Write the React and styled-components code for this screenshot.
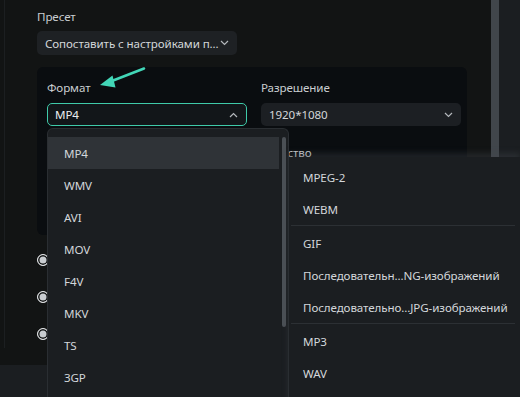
import React from "react";
import styled, { createGlobalStyle } from "styled-components";

const Global = createGlobalStyle`
  html, body { margin: 0; padding: 0; background: #121414; }
  body { font-family: "Noto Sans", "Open Sans", sans-serif; font-size: 11.6px; letter-spacing: -0.1px; }
  * { box-sizing: border-box; }
`;

const Screen = styled.div`
  position: relative;
  width: 520px;
  height: 397px;
  overflow: hidden;
  display: grid;
  grid-template-columns: 491px 8px 21px;
  grid-template-rows: 365px 32px;
  background: #1b1e21;
`;

const Main = styled.div`
  position: relative;
  background: #121414;
  padding: 9px 0 0 37px;
  &::before {
    content: "";
    position: absolute;
    left: 4px;
    top: 0;
    height: 348px;
    width: 1px;
    background: #1c1f21;
  }
`;

const ScrollTrack = styled.div`
  background: #41464b;
`;

const Side = styled.div`
  background: #1b1e21;
`;

const Footer = styled.div`
  grid-column: 1 / 4;
  background: #1b1e21;
`;

const Label = styled.div`
  line-height: 16px;
  height: 16px;
  color: #c9cdd1;
  white-space: nowrap;
`;

const SelectBox = styled.div`
  display: flex;
  align-items: center;
  justify-content: space-between;
  width: ${(p) => p.$w || 200}px;
  height: ${(p) => p.$h || 23}px;
  margin-top: ${(p) => p.$mt || 7}px;
  padding: 0 8px 0 ${(p) => (p.$active ? 7 : 8)}px;
  border-radius: 5px;
  background: ${(p) => (p.$active ? "#121619" : p.$bg || "#1c1f23")};
  border: ${(p) => (p.$active ? "1px solid #3fcaa9" : "none")};
  color: ${(p) => (p.$active ? "#eceef0" : "#d3d6d9")};
  white-space: nowrap;
`;

const Card = styled.div`
  width: 430px;
  height: 168px;
  margin-top: 12px;
  background: #0a0d10;
  border-radius: 6px;
  padding: 13px 6px 0 10px;
`;

const FieldGrid = styled.div`
  display: grid;
  grid-template-columns: 199px 200px;
  column-gap: 15px;
  row-gap: 19px;
`;

const Field = styled.div`
  display: flex;
  flex-direction: column;
`;

const Radios = styled.div`
  display: flex;
  flex-direction: column;
  gap: 25px;
  margin-top: 19px;
`;

const RadioDot = styled.span`
  display: block;
  width: 12px;
  height: 12px;
  border-radius: 50%;
  border: 1.5px solid #e4e6e8;
  background: #c8ccd0;
  box-shadow: inset 0 0 0 1.5px #121414;
`;

const Menu = styled.div`
  position: absolute;
  left: 47px;
  top: 128px;
  width: 242px;
  height: 290px;
  display: flex;
  background: #1b1e21;
  border: 1px solid #2a2e32;
  border-bottom: none;
  border-radius: 6px 6px 0 0;
  padding-top: 8px;
`;

const MenuList = styled.div`
  flex: 1;
  display: flex;
  flex-direction: column;
`;

const MenuRail = styled.div`
  width: 9px;
  padding: 0 1px 0 3px;
`;

const Thumb = styled.div`
  width: 4px;
  height: 190px;
  border-radius: 2px;
  background: #4b5055;
`;

const Item = styled.div`
  flex-shrink: 0;
  display: flex;
  align-items: center;
  height: 32px;
  padding-left: ${(p) => p.$pl || 16}px;
  color: #d3d7db;
  white-space: nowrap;
  background: ${(p) => (p.$hl ? "#2f3337" : "transparent")};
`;

const SubMenu = styled.div`
  position: absolute;
  left: 288px;
  top: 157px;
  width: 232px;
  height: 270px;
  background: #1b1e21;
  border-left: 1px solid #2a2e32;
  padding-top: 4px;
  display: flex;
  flex-direction: column;
  box-shadow: 0 -4px 6px rgba(70, 75, 80, 0.35);
`;

const Divider = styled.div`
  flex-shrink: 0;
  height: 1px;
  margin: 0 5px 1px 2px;
  background: #2c3034;
`;

const ArrowSvg = styled.svg`
  position: absolute;
  left: 95px;
  top: 62px;
`;

const Chevron = ({ up }) => (
  <svg width="9" height="6" viewBox="0 0 9 6">
    <path
      d={up ? "M1 5 L4.5 1.5 L8 5" : "M1 1 L4.5 4.5 L8 1"}
      fill="none"
      stroke="#b4b8bc"
      strokeWidth="1.2"
    />
  </svg>
);

const formats = ["MP4", "WMV", "AVI", "MOV", "F4V", "MKV", "TS", "3GP"];

export default function App() {
  return (
    <>
      <Global />
      <Screen>
        <Main>
          <Label>Пресет</Label>
          <SelectBox $w={200} $h={24} $mt={6} $bg="#1e2124">
            <span>Сопоставить с настройками п...</span>
            <Chevron />
          </SelectBox>
          <Card>
            <FieldGrid>
              <Field>
                <Label>Формат</Label>
                <SelectBox $active>
                  <span>MP4</span>
                  <Chevron up />
                </SelectBox>
              </Field>
              <Field>
                <Label>Разрешение</Label>
                <SelectBox>
                  <span>1920*1080</span>
                  <Chevron />
                </SelectBox>
              </Field>
              <Field>
                <Label />
                <SelectBox />
              </Field>
              <Field>
                <Label>Качество</Label>
                <SelectBox />
              </Field>
            </FieldGrid>
          </Card>
          <Radios>
            <RadioDot />
            <RadioDot />
            <RadioDot />
          </Radios>
        </Main>
        <ScrollTrack />
        <Side />
        <Footer />

        <ArrowSvg width="56" height="30" viewBox="95 62 56 30">
          <line x1="144" y1="68.5" x2="108" y2="82.5" stroke="#42d6b7" strokeWidth="2.6" strokeLinecap="round" />
          <polygon points="100,85 112.5,75.5 115.5,87.5" fill="#42d6b7" />
        </ArrowSvg>

        <Menu>
          <MenuList>
            {formats.map((f, i) => (
              <Item key={f} $hl={i === 0}>{f}</Item>
            ))}
          </MenuList>
          <MenuRail>
            <Thumb />
          </MenuRail>
        </Menu>

        <SubMenu>
          <Item $pl={14}>MPEG-2</Item>
          <Item $pl={14}>WEBM</Item>
          <Divider />
          <Item $pl={14}>GIF</Item>
          <Item $pl={14}>Последовательн...NG-изображений</Item>
          <Item $pl={14}>Последовательно...JPG-изображений</Item>
          <Divider />
          <Item $pl={14}>MP3</Item>
          <Item $pl={14}>WAV</Item>
        </SubMenu>
      </Screen>
    </>
  );
}
